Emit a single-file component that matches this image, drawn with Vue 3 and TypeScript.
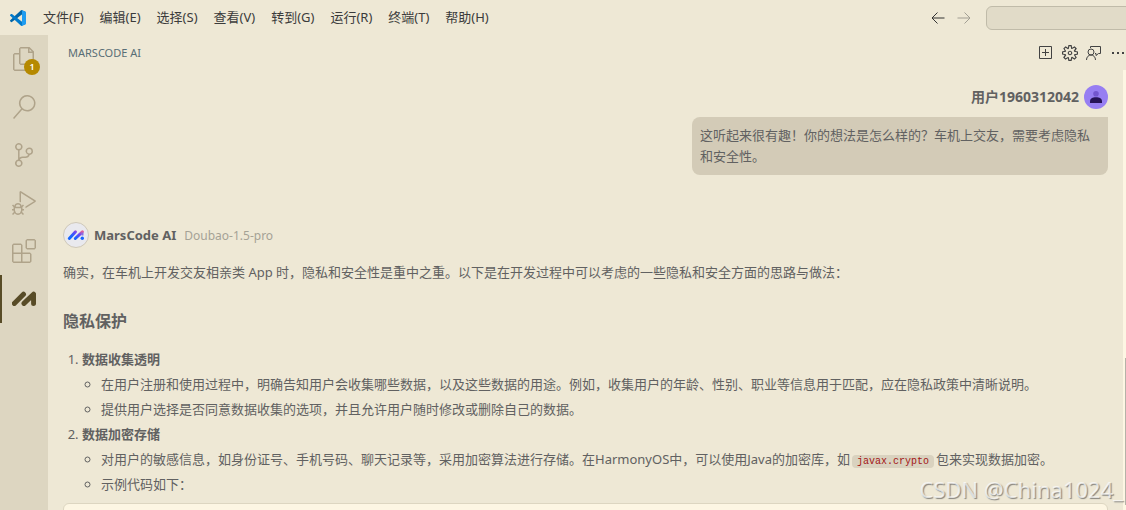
<script setup lang="ts">
interface Activity {
  name: string
  path: string
  badge?: number
}

interface Section {
  title: string
  items: { text: string; code?: string; rest?: string }[]
}

const menus: string[] = ['文件(F)', '编辑(E)', '选择(S)', '查看(V)', '转到(G)', '运行(R)', '终端(T)', '帮助(H)']

const activities: Activity[] = [
  {
    name: '资源管理器',
    badge: 1,
    path: 'M17.5 0h-9L7 1.5V6H2.5L1 7.5v15.07L2.5 24h12.07L16 22.57V18h4.7l1.3-1.43V4.5L17.5 0zm0 2.12l2.38 2.38H17.5V2.12zm-3 20.38h-12v-15H7v9.07L8.5 18h6v4.5zm6-6h-12v-15H16V6h4.5v10.5z',
  },
  {
    name: '搜索',
    path: 'M15.25 0a8.25 8.25 0 0 0-6.18 13.72L1 22.88l1.12 1 8.05-9.12A8.251 8.251 0 1 0 15.25.01V0zm0 15a6.75 6.75 0 1 1 0-13.5 6.75 6.75 0 0 1 0 13.5z',
  },
  {
    name: '源代码管理',
    path: 'M21.007 8.222A3.738 3.738 0 0 0 15.045 5.2a3.737 3.737 0 0 0 1.156 6.583 2.988 2.988 0 0 1-2.668 1.67h-2.99a4.456 4.456 0 0 0-2.989 1.165V7.4a3.737 3.737 0 1 0-1.494 0v9.117a3.776 3.776 0 1 0 1.816.099 2.99 2.99 0 0 1 2.668-1.667h2.99a4.484 4.484 0 0 0 4.223-3.039 3.736 3.736 0 0 0 3.25-3.687zM4.565 3.738a2.242 2.242 0 1 1 4.484 0 2.242 2.242 0 0 1-4.484 0zm4.484 16.441a2.242 2.242 0 1 1-4.484 0 2.242 2.242 0 0 1 4.484 0zm8.221-9.715a2.242 2.242 0 1 1 0-4.485 2.242 2.242 0 0 1 0 4.485z',
  },
  {
    name: '运行和调试',
    path: 'M10.94 13.5l-1.32 1.32a3.73 3.73 0 0 0-7.24 0L1.06 13.5 0 14.56l1.72 1.72-.22.22V18H0v1.5h1.5v.08c.077.489.214.966.41 1.42L0 22.94 1.06 24l1.65-1.65A4.308 4.308 0 0 0 6 24a4.31 4.31 0 0 0 3.29-1.65L10.94 24 12 22.94 10.09 21c.198-.464.336-.951.41-1.45v-.1H12V18h-1.5v-1.5l-.22-.22L12 14.56l-1.06-1.06zM6 13.5a2.25 2.25 0 0 1 2.25 2.25h-4.5A2.25 2.25 0 0 1 6 13.5zm3 6a3.33 3.33 0 0 1-3 3 3.33 3.33 0 0 1-3-3v-2.25h6v2.25zm14.76-9.9v1.26L13.5 17.37V15.6l8.5-5.37L9 2v9.46a5.07 5.07 0 0 0-1.5-.72V.63L8.64 0l15.12 9.6z',
  },
  {
    name: '扩展',
    path: 'M13.5 1.5L15 0h7.5L24 1.5V9l-1.5 1.5H15L13.5 9V1.5zm1.5 0V9h7.5V1.5H15zM0 15V6l1.5-1.5H9L10.5 6v7.5H18l1.5 1.5v7.5L18 24H1.5L0 22.5V15zm9-1.5V6H1.5v7.5H9zM9 15H1.5v7.5H9V15zm1.5 7.5H18V15h-7.5v7.5z',
  },
]

const sections: Section[] = [
  {
    title: '数据收集透明',
    items: [
      { text: '在用户注册和使用过程中，明确告知用户会收集哪些数据，以及这些数据的用途。例如，收集用户的年龄、性别、职业等信息用于匹配，应在隐私政策中清晰说明。' },
      { text: '提供用户选择是否同意数据收集的选项，并且允许用户随时修改或删除自己的数据。' },
    ],
  },
  {
    title: '数据加密存储',
    items: [
      {
        text: '对用户的敏感信息，如身份证号、手机号码、聊天记录等，采用加密算法进行存储。在HarmonyOS中，可以使用Java的加密库，如',
        code: 'javax.crypto',
        rest: '包来实现数据加密。',
      },
      { text: '示例代码如下：' },
    ],
  },
]
</script>

<template>
  <div class="window" lang="zh-CN">
    <header class="titlebar">
      <svg class="logo" viewBox="0 0 100 100" aria-hidden="true">
        <path fill="#0065a9" d="M96.5 10.8 75.9.9a6.2 6.2 0 0 0-7.1 1.2L1.3 63.5a4.2 4.2 0 0 0 0 6.2l5.5 5a4.2 4.2 0 0 0 5.3.2L93.4 13.3A4.1 4.1 0 0 1 100 16.6z" />
        <path fill="#007acc" d="M96.5 89.3 75.9 99.2a6.2 6.2 0 0 1-7.1-1.2L1.3 36.6a4.2 4.2 0 0 1 0-6.2l5.5-5a4.2 4.2 0 0 1 5.3-.2L93.4 86.8A4.1 4.1 0 0 0 100 83.5z" />
        <path fill="#1f9cf0" d="M75.9 99.2a6.2 6.2 0 0 1-7.1-1.2 3.7 3.7 0 0 0 6.2-2.6V4.7a3.7 3.7 0 0 0-6.2-2.6A6.2 6.2 0 0 1 75.9.9l20.6 9.9A6.2 6.2 0 0 1 100 16.4v67.3a6.2 6.2 0 0 1-3.5 5.6z" />
      </svg>
      <nav class="menus">
        <button v-for="menu in menus" :key="menu" type="button">{{ menu }}</button>
      </nav>
      <div class="history">
        <button type="button" aria-label="后退">
          <svg viewBox="0 0 16 16"><path d="M14.5 8H2M7.5 2.5 2 8l5.5 5.5" /></svg>
        </button>
        <button type="button" aria-label="前进" disabled>
          <svg viewBox="0 0 16 16"><path d="M1.5 8H14M8.5 2.5 14 8l-5.5 5.5" /></svg>
        </button>
      </div>
      <input class="command" type="text" aria-label="搜索" />
    </header>

    <div class="body">
      <nav class="activity">
        <button v-for="item in activities" :key="item.name" type="button" :aria-label="item.name">
          <svg viewBox="0 0 24 24"><path :d="item.path" /></svg>
          <span v-if="item.badge" class="badge">{{ item.badge }}</span>
        </button>
        <button type="button" class="active" aria-label="MarsCode AI">
          <svg viewBox="0 0 24 24">
            <path class="thick" d="M2.300 16.400 11.500 7.200M12 16.400 21.600 7.200V16.400" />
          </svg>
        </button>
      </nav>

      <main class="panel">
        <div class="panel-head">
          <h2>MARSCODE AI</h2>
          <div class="actions">
            <button type="button" aria-label="新建对话">
              <svg viewBox="0 0 16 16"><path class="line" d="M1.5 1.5h12v12h-12zM7.5 4v7M4 7.5h7" /></svg>
            </button>
            <button type="button" aria-label="设置">
              <svg viewBox="1 1 14 14"><path d="M9.1 4.4L8.6 2H7.4l-.5 2.4-.7.3-2-1.3-.9.8 1.3 2-.2.7-2.4.5v1.2l2.4.5.3.8-1.3 2 .8.8 2-1.3.8.3.4 2.3h1.2l.5-2.4.8-.3 2 1.3.8-.8-1.3-2 .3-.8 2.3-.4V7.4l-2.4-.5-.3-.8 1.3-2-.8-.8-2 1.3-.7-.2zM9.4 1l.5 2.4L12 2.1l2 2-1.4 2.1 2.4.4v2.8l-2.4.5L14 12l-2 2-2.1-1.4-.5 2.4H6.6l-.5-2.4L4 13.9l-2-2 1.4-2.1L1 9.4V6.6l2.4-.5L2.1 4l2-2 2.1 1.4.4-2.4h2.8zm.6 7c0 1.1-.9 2-2 2s-2-.9-2-2 .9-2 2-2 2 .9 2 2zM8 9c.6 0 1-.4 1-1s-.4-1-1-1-1 .4-1 1 .4 1 1 1z" /></svg>
            </button>
            <button type="button" aria-label="反馈">
              <svg viewBox="0 0 16 16"><path class="line" d="M4.5 3V1.500h10v7h-2l-2.500 2V8.500H9M5 4a3 3 0 1 0 0 6 3 3 0 0 0 0-6zM.5 15c0-3 2-5 4.500-5s4.500 2 4.500 5" /></svg>
            </button>
            <button type="button" aria-label="更多">
              <svg viewBox="0 0 16 16"><path d="M2 7h2v2H2zM7 7h2v2H7zM12 7h2v2h-2z" /></svg>
            </button>
          </div>
        </div>

        <div class="scroll">
          <div class="chat">
            <article class="question">
              <div class="author">
                <strong>用户1960312042</strong>
                <svg class="avatar" viewBox="0 0 24 24" aria-hidden="true">
                  <circle cx="12" cy="12" r="12" fill="#977ef2" />
                  <circle cx="12" cy="8.700" r="2.800" fill="#7356cf" />
                  <path d="M6 18v-1.500C6 13.500 8.500 12.300 12 12.300s6 1.200 6 4.200V18z" fill="#261358" />
                </svg>
              </div>
              <p class="bubble">这听起来很有趣！你的想法是怎么样的？车机上交友，需要考虑隐私和安全性。</p>
            </article>

            <article class="answer">
              <div class="author">
                <svg class="mark" viewBox="0 0 26 26" aria-hidden="true">
                  <defs>
                    <linearGradient id="mars" x1="0" y1="1" x2="1" y2="0">
                      <stop offset="0.250" stop-color="#1664ff" />
                      <stop offset="0.700" stop-color="#6a45f5" />
                      <stop offset="1" stop-color="#e0609a" />
                    </linearGradient>
                  </defs>
                  <circle cx="13" cy="13" r="12.500" fill="#e9e9ee" stroke="#cfc8b8" />
                  <path d="M6.300 16.500 12.500 9.800M12.300 16.500 19.400 9.800" fill="none" stroke="url(#mars)" stroke-width="3" stroke-linecap="round" />
                  <path d="M19.500 10.500v3" stroke="#8a6fe0" stroke-width="2" />
                  <circle cx="19.300" cy="16.300" r="1.700" fill="#1664ff" />
                </svg>
                <strong>MarsCode AI</strong>
                <span class="model">Doubao-1.5-pro</span>
              </div>
              <p>确实，在车机上开发交友相亲类 App 时，隐私和安全性是重中之重。以下是在开发过程中可以考虑的一些隐私和安全方面的思路与做法：</p>
              <h3>隐私保护</h3>
              <ol>
                <li v-for="section in sections" :key="section.title">
                  <strong>{{ section.title }}</strong>
                  <ul>
                    <li v-for="item in section.items" :key="item.text">{{ item.text }}<code v-if="item.code">{{ item.code }}</code>{{ item.rest }}</li>
                  </ul>
                </li>
              </ol>
              <pre class="code-block"></pre>
            </article>
          </div>
          <div class="track"><div class="thumb"></div></div>
        </div>
      </main>
    </div>
    <div class="watermark">CSDN @China1024_</div>
  </div>
</template>

<style>
body {
  margin: 0;
}
</style>

<style scoped>
.window {
  position: relative;
  display: flex;
  flex-direction: column;
  height: 100vh;
  overflow: hidden;
  background: #eee8d5;
  color: #616161;
  font: 13px/25px "Noto Sans", "Noto Sans CJK SC", sans-serif;
}

button {
  display: flex;
  align-items: center;
  justify-content: center;
  padding: 0;
  border: 0;
  background: none;
  color: inherit;
  font: inherit;
}

h2,
h3,
p,
ol,
ul,
pre {
  margin: 0;
}

.titlebar {
  display: flex;
  flex: none;
  align-items: center;
  height: 35px;
  padding-left: 10px;
}

.logo {
  flex: none;
  width: 16px;
  height: 16px;
}

.menus {
  display: flex;
  flex: 1;
  padding-left: 9px;
  color: #3b3b3b;
}

.menus button {
  padding: 0 8px;
  white-space: nowrap;
}

.history {
  display: flex;
  gap: 10px;
  margin-right: 14px;
}

.history svg {
  width: 16px;
  height: 16px;
  fill: none;
  stroke: #333333;
}

.history button:disabled {
  opacity: 0.4;
}

.command {
  box-sizing: border-box;
  flex: none;
  width: 148px;
  height: 24px;
  margin-right: -8px;
  border: 1px solid #c0bba9;
  border-radius: 6px;
  background: #e1dbc8;
}

.body {
  display: flex;
  flex: 1;
  min-height: 0;
}

.activity {
  flex: none;
  width: 48px;
  background: #ddd6c1;
}

.activity button {
  position: relative;
  box-sizing: border-box;
  width: 100%;
  height: 48px;
}

.activity svg {
  width: 24px;
  height: 24px;
  fill: #afa38a;
}

.activity .thick {
  fill: none;
  stroke: #584c27;
  stroke-width: 5;
  stroke-linecap: round;
  stroke-linejoin: round;
}

.activity .active::before {
  content: "";
  position: absolute;
  inset: 0 auto 0 0;
  width: 2px;
  background: #584c27;
}

.badge {
  position: absolute;
  right: 8px;
  bottom: 8px;
  width: 16px;
  border-radius: 8px;
  background: #b58900;
  color: #ffffff;
  font-size: 9px;
  font-weight: 600;
  line-height: 16px;
}

.panel {
  display: flex;
  flex: 1;
  flex-direction: column;
  min-width: 0;
}

.panel-head {
  display: flex;
  flex: none;
  align-items: center;
  justify-content: space-between;
  height: 35px;
  padding-left: 20px;
}

.panel-head h2 {
  color: #586e75;
  font-size: 11px;
  font-weight: 400;
}

.actions {
  display: flex;
  gap: 8px;
}

.actions svg {
  width: 16px;
  height: 16px;
  fill: #424242;
}

.actions .line {
  fill: none;
  stroke: #424242;
}

.scroll {
  display: flex;
  flex: 1;
  min-height: 0;
}

.chat {
  flex: 1;
  min-width: 0;
  padding: 15px 15px 0;
  overflow: hidden;
}

.track {
  flex: none;
  width: 3px;
  padding-top: 288px;
  background: #fdf6e3;
}

.thumb {
  width: 1px;
  height: 147px;
  margin-left: auto;
  background: #b5b3a8;
}

.author {
  display: flex;
  align-items: center;
  gap: 5px;
}

.question {
  display: flex;
  flex-direction: column;
  align-items: flex-end;
  gap: 8px;
}

.question .author {
  font-size: 14px;
  line-height: 24px;
}

.avatar {
  width: 24px;
  height: 24px;
}

.bubble {
  box-sizing: border-box;
  max-width: 416px;
  padding: 8px;
  border-radius: 8px 0 8px 8px;
  background: #d3cbb7;
  line-height: 21px;
}

.answer {
  padding-top: 47px;
}

.mark {
  width: 26px;
  height: 26px;
}

.model {
  padding-left: 3px;
  color: #a5a295;
  font-size: 12px;
}

.answer p {
  padding: 12px 0 24px;
}

.answer h3 {
  padding-bottom: 13px;
  font-size: 16px;
}

.answer ol,
.answer ul {
  padding-left: 19px;
}

.answer ul {
  list-style: circle;
}

.answer code {
  margin: 0 2px;
  padding: 1px 5px;
  border-radius: 4px;
  background: #d9d2bf;
  color: #a31515;
  font-family: "Liberation Mono", monospace;
  font-size: 10px;
  line-height: 12px;
}

.code-block {
  min-height: 120px;
  margin-top: 6px;
  border: 1px solid #ddd6c1;
  border-radius: 6px;
  background: #fdf6e3;
}

.watermark {
  position: absolute;
  right: 3px;
  bottom: 5px;
  color: rgba(255, 255, 255, 0.7);
  font: 22px/32px "Noto Sans", sans-serif;
  text-shadow: 1px 1px 1px rgba(90, 90, 90, 0.7);
}
</style>
